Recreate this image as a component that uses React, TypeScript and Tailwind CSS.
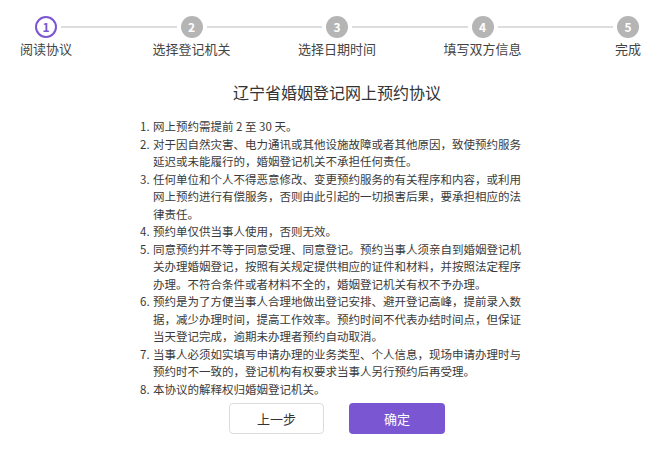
const steps = ['阅读协议', '选择登记机关', '选择日期时间', '填写双方信息', '完成']

const items = [
  '网上预约需提前 2 至 30 天。',
  '对于因自然灾害、电力通讯或其他设施故障或者其他原因，致使预约服务延迟或未能履行的，婚姻登记机关不承担任何责任。',
  '任何单位和个人不得恶意修改、变更预约服务的有关程序和内容，或利用网上预约进行有偿服务，否则由此引起的一切损害后果，要承担相应的法律责任。',
  '预约单仅供当事人使用，否则无效。',
  '同意预约并不等于同意受理、同意登记。预约当事人须亲自到婚姻登记机关办理婚姻登记，按照有关规定提供相应的证件和材料，并按照法定程序办理。不符合条件或者材料不全的，婚姻登记机关有权不予办理。',
  '预约是为了方便当事人合理地做出登记安排、避开登记高峰，提前录入数据，减少办理时间，提高工作效率。预约时间不代表办结时间点，但保证当天登记完成，逾期未办理者预约自动取消。',
  '当事人必须如实填写申请办理的业务类型、个人信息，现场申请办理时与预约时不一致的，登记机构有权要求当事人另行预约后再受理。',
  '本协议的解释权归婚姻登记机关。',
]

const Step = ({ n, label, active }: { n: number; label: string; active?: boolean }) => (
  <div className="flex w-[22px] flex-col items-center">
    {active ? (
      <div className="flex h-[22px] w-[22px] items-center justify-center rounded-full border-2 border-[#7b56d3] bg-white text-[12px] font-bold text-[#7b56d3]">
        {n}
      </div>
    ) : (
      <div className="flex h-[22px] w-[22px] items-center justify-center rounded-full bg-[#b5b5b5] text-[12px] font-bold text-white">
        {n}
      </div>
    )}
    <div className="mt-[2px] whitespace-nowrap text-[13px] leading-[18px] text-[#444]">
      {label}
    </div>
  </div>
)

export default function App() {
  return (
    <div
      className="h-[453px] w-[666px] overflow-hidden bg-white pl-[8px]"
      style={{ fontFamily: '"Noto Sans CJK SC", "Noto Sans", sans-serif' }}
    >
      <div className="flex items-start px-[27px] pt-[16px]">
        {steps.map((s, i) => (
          <div key={s} className={i < steps.length - 1 ? 'flex flex-1 items-start' : 'flex items-start'}>
            <Step n={i + 1} label={s} active={i === 0} />
            {i < steps.length - 1 && (
              <div className="mx-[4px] mt-[10px] h-[2px] flex-1 bg-[#dddddd]" />
            )}
          </div>
        ))}
      </div>

      <h1 className="mt-[22px] text-center text-[16px] leading-[24px] text-[#333]">
        辽宁省婚姻登记网上预约协议
      </h1>

      <ol className="mx-auto mt-[14px] w-[394px] text-[11.5px] leading-[17.5px] text-[#3a3a3a]">
        {items.map((t, i) => (
          <li key={i} className="flex">
            <span className="w-[13px] shrink-0">{i + 1}.</span>
            <span className="w-[372px]">{t}</span>
          </li>
        ))}
      </ol>

      <div className="mt-[5px] flex justify-center gap-[25px]">
        <button className="h-[31px] w-[95px] rounded-[4px] border border-[#dcdcdc] bg-white text-[13px] text-[#333]">
          上一步
        </button>
        <button className="h-[31px] w-[96px] rounded-[4px] bg-[#7b56d3] text-[13px] text-white">
          确定
        </button>
      </div>
    </div>
  )
}
